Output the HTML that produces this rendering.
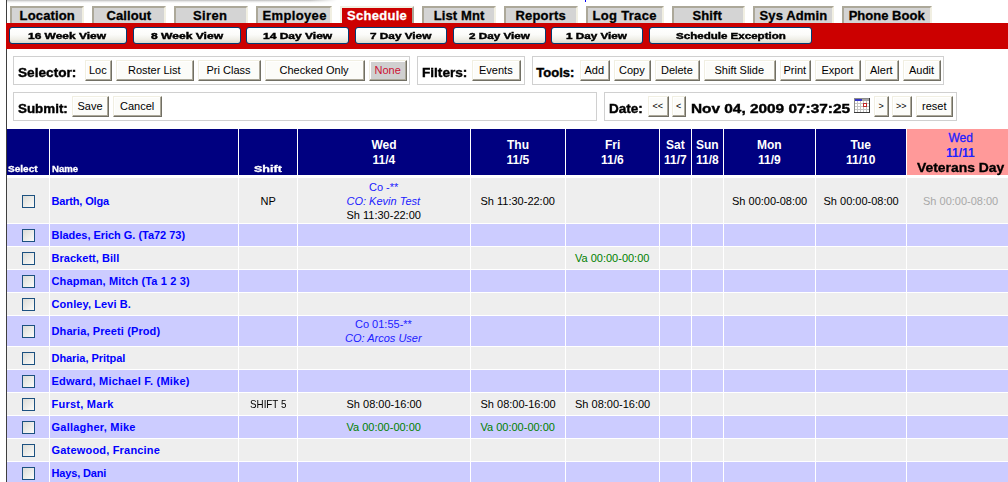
<!DOCTYPE html>
<html><head><meta charset="utf-8"><style>
html,body{margin:0;padding:0;background:#fff;}
body{width:1008px;height:482px;overflow:hidden;position:relative;font-family:"Liberation Sans",sans-serif;}
body>div,body>svg{position:absolute;}
</style></head><body>
<div style="left:6px;top:0px;width:1px;height:482px;background:#3f3f3f"></div>
<div style="left:7px;top:0;width:330px;height:3px;background:linear-gradient(#bdbdbd,#e6e6e6 50%,#fff);-webkit-mask-image:linear-gradient(90deg,#000 92%,transparent)"></div>
<div style="left:10px;top:6px;width:74px;height:17px;background:#d4d4d4;border-top:2px solid #aca899;border-left:2px solid #aca899;border-right:2px solid #f1efe2;box-sizing:border-box"></div>
<div style="top:8px;line-height:15px;font-size:13px;color:#000;white-space:nowrap;font-weight:bold;letter-spacing:0.143px;-webkit-text-stroke:0.3px #000;left:19.60px;">Location</div>
<div style="left:92px;top:6px;width:74px;height:17px;background:#d4d4d4;border-top:2px solid #aca899;border-left:2px solid #aca899;border-right:2px solid #f1efe2;box-sizing:border-box"></div>
<div style="top:8px;line-height:15px;font-size:13px;color:#000;white-space:nowrap;font-weight:bold;letter-spacing:0.083px;-webkit-text-stroke:0.3px #000;left:106.50px;">Callout</div>
<div style="left:174px;top:6px;width:74px;height:17px;background:#d4d4d4;border-top:2px solid #aca899;border-left:2px solid #aca899;border-right:2px solid #f1efe2;box-sizing:border-box"></div>
<div style="top:8px;line-height:15px;font-size:13px;color:#000;white-space:nowrap;font-weight:bold;letter-spacing:0.375px;-webkit-text-stroke:0.3px #000;left:193.00px;">Siren</div>
<div style="left:256px;top:6px;width:76px;height:17px;background:#d4d4d4;border-top:2px solid #aca899;border-left:2px solid #aca899;border-right:2px solid #f1efe2;box-sizing:border-box"></div>
<div style="top:8px;line-height:15px;font-size:13px;color:#000;white-space:nowrap;font-weight:bold;letter-spacing:0.357px;-webkit-text-stroke:0.3px #000;left:262.50px;">Employee</div>
<div style="left:340px;top:6px;width:74px;height:17px;background:#cc0000;border-top:2px solid #f1efe2;border-left:2px solid #f1efe2;border-right:2px solid #aca899;box-sizing:border-box"></div>
<div style="top:8px;line-height:15px;font-size:13px;color:#fff;white-space:nowrap;font-weight:bold;letter-spacing:0.286px;-webkit-text-stroke:0.3px #fff;left:347.00px;">Schedule</div>
<div style="left:422px;top:6px;width:74px;height:17px;background:#d4d4d4;border-top:2px solid #aca899;border-left:2px solid #aca899;border-right:2px solid #f1efe2;box-sizing:border-box"></div>
<div style="top:8px;line-height:15px;font-size:13px;color:#000;white-space:nowrap;font-weight:bold;letter-spacing:0.107px;-webkit-text-stroke:0.3px #000;left:433.75px;">List Mnt</div>
<div style="left:504px;top:6px;width:74px;height:17px;background:#d4d4d4;border-top:2px solid #aca899;border-left:2px solid #aca899;border-right:2px solid #f1efe2;box-sizing:border-box"></div>
<div style="top:8px;line-height:15px;font-size:13px;color:#000;white-space:nowrap;font-weight:bold;letter-spacing:0.167px;-webkit-text-stroke:0.3px #000;left:515.50px;">Reports</div>
<div style="left:586px;top:6px;width:78px;height:17px;background:#d4d4d4;border-top:2px solid #aca899;border-left:2px solid #aca899;border-right:2px solid #f1efe2;box-sizing:border-box"></div>
<div style="top:8px;line-height:15px;font-size:13px;color:#000;white-space:nowrap;font-weight:bold;letter-spacing:0.312px;-webkit-text-stroke:0.3px #000;left:592.50px;">Log Trace</div>
<div style="left:672px;top:6px;width:73px;height:17px;background:#d4d4d4;border-top:2px solid #aca899;border-left:2px solid #aca899;border-right:2px solid #f1efe2;box-sizing:border-box"></div>
<div style="top:8px;line-height:15px;font-size:13px;color:#000;white-space:nowrap;font-weight:bold;letter-spacing:0.125px;-webkit-text-stroke:0.3px #000;left:692.50px;">Shift</div>
<div style="left:753px;top:6px;width:81px;height:17px;background:#d4d4d4;border-top:2px solid #aca899;border-left:2px solid #aca899;border-right:2px solid #f1efe2;box-sizing:border-box"></div>
<div style="top:8px;line-height:15px;font-size:13px;color:#000;white-space:nowrap;font-weight:bold;letter-spacing:0.125px;-webkit-text-stroke:0.3px #000;left:759.50px;">Sys Admin</div>
<div style="left:842px;top:6px;width:90px;height:17px;background:#d4d4d4;border-top:2px solid #aca899;border-left:2px solid #aca899;border-right:2px solid #f1efe2;box-sizing:border-box"></div>
<div style="top:8px;line-height:15px;font-size:13px;color:#000;white-space:nowrap;font-weight:bold;letter-spacing:0.011px;-webkit-text-stroke:0.3px #000;left:848.70px;">Phone Book</div>
<div style="left:6px;top:23px;width:1002px;height:26px;background:#cc0000"></div>
<div style="left:9px;top:27px;width:118px;height:17px;box-sizing:border-box;border:1px solid #003c74;border-radius:3px;background:linear-gradient(#fff 0%,#fbfbf9 45%,#f0efe8 75%,#dcd9ca 100%)"></div>
<div style="top:30px;line-height:11px;font-size:9.5px;color:#000;white-space:nowrap;font-weight:bold;transform:scaleX(1.2579);transform-origin:0 0;-webkit-text-stroke:0.45px #000;left:28.38px;">16 Week View</div>
<div style="left:133px;top:27px;width:108px;height:17px;box-sizing:border-box;border:1px solid #003c74;border-radius:3px;background:linear-gradient(#fff 0%,#fbfbf9 45%,#f0efe8 75%,#dcd9ca 100%)"></div>
<div style="top:30px;line-height:11px;font-size:9.5px;color:#000;white-space:nowrap;font-weight:bold;transform:scaleX(1.2719);transform-origin:0 0;-webkit-text-stroke:0.45px #000;left:150.75px;">8 Week View</div>
<div style="left:246px;top:27px;width:103px;height:17px;box-sizing:border-box;border:1px solid #003c74;border-radius:3px;background:linear-gradient(#fff 0%,#fbfbf9 45%,#f0efe8 75%,#dcd9ca 100%)"></div>
<div style="top:30px;line-height:11px;font-size:9.5px;color:#000;white-space:nowrap;font-weight:bold;transform:scaleX(1.2636);transform-origin:0 0;-webkit-text-stroke:0.45px #000;left:262.75px;">14 Day View</div>
<div style="left:355px;top:27px;width:92px;height:17px;box-sizing:border-box;border:1px solid #003c74;border-radius:3px;background:linear-gradient(#fff 0%,#fbfbf9 45%,#f0efe8 75%,#dcd9ca 100%)"></div>
<div style="top:30px;line-height:11px;font-size:9.5px;color:#000;white-space:nowrap;font-weight:bold;transform:scaleX(1.2400);transform-origin:0 0;-webkit-text-stroke:0.45px #000;left:370.00px;">7 Day View</div>
<div style="left:453px;top:27px;width:93px;height:17px;box-sizing:border-box;border:1px solid #003c74;border-radius:3px;background:linear-gradient(#fff 0%,#fbfbf9 45%,#f0efe8 75%,#dcd9ca 100%)"></div>
<div style="top:30px;line-height:11px;font-size:9.5px;color:#000;white-space:nowrap;font-weight:bold;transform:scaleX(1.2300);transform-origin:0 0;-webkit-text-stroke:0.45px #000;left:468.75px;">2 Day View</div>
<div style="left:551px;top:27px;width:92px;height:17px;box-sizing:border-box;border:1px solid #003c74;border-radius:3px;background:linear-gradient(#fff 0%,#fbfbf9 45%,#f0efe8 75%,#dcd9ca 100%)"></div>
<div style="top:30px;line-height:11px;font-size:9.5px;color:#000;white-space:nowrap;font-weight:bold;transform:scaleX(1.2300);transform-origin:0 0;-webkit-text-stroke:0.45px #000;left:566.25px;">1 Day View</div>
<div style="left:649px;top:27px;width:163px;height:17px;box-sizing:border-box;border:1px solid #003c74;border-radius:3px;background:linear-gradient(#fff 0%,#fbfbf9 45%,#f0efe8 75%,#dcd9ca 100%)"></div>
<div style="top:30px;line-height:11px;font-size:9.5px;color:#000;white-space:nowrap;font-weight:bold;transform:scaleX(1.2167);transform-origin:0 0;-webkit-text-stroke:0.45px #000;left:675.75px;">Schedule Exception</div>
<div style="left:13px;top:56px;width:397px;height:29px;box-sizing:border-box;border:1px solid #d0d0d0;"></div>
<div style="top:65px;line-height:15px;font-size:13px;color:#000;white-space:nowrap;font-weight:bold;transform:scaleX(1.0491);transform-origin:0 0;-webkit-text-stroke:0.4px #000;left:17.50px;">Selector:</div>
<div style="left:85px;top:60px;width:27px;height:21px;box-sizing:border-box;background:#fcfcf9;border:1px solid;border-color:#f1efe2 #716f64 #716f64 #f1efe2;box-shadow:inset -1px -1px #aca899,inset 1px 1px #fff"></div>
<div style="top:64px;line-height:12px;font-size:11px;color:#000;white-space:nowrap;left:89.00px;">Loc</div>
<div style="left:116px;top:60px;width:78px;height:21px;box-sizing:border-box;background:#fcfcf9;border:1px solid;border-color:#f1efe2 #716f64 #716f64 #f1efe2;box-shadow:inset -1px -1px #aca899,inset 1px 1px #fff"></div>
<div style="top:64px;line-height:12px;font-size:11px;color:#000;white-space:nowrap;left:128.00px;">Roster List</div>
<div style="left:198px;top:60px;width:63px;height:21px;box-sizing:border-box;background:#fcfcf9;border:1px solid;border-color:#f1efe2 #716f64 #716f64 #f1efe2;box-shadow:inset -1px -1px #aca899,inset 1px 1px #fff"></div>
<div style="top:64px;line-height:12px;font-size:11px;color:#000;white-space:nowrap;left:206.50px;">Pri Class</div>
<div style="left:265px;top:60px;width:100px;height:21px;box-sizing:border-box;background:#fcfcf9;border:1px solid;border-color:#f1efe2 #716f64 #716f64 #f1efe2;box-shadow:inset -1px -1px #aca899,inset 1px 1px #fff"></div>
<div style="top:64px;line-height:12px;font-size:11px;color:#000;white-space:nowrap;left:279.50px;">Checked Only</div>
<div style="left:369px;top:60px;width:38px;height:21px;box-sizing:border-box;background:#d0d0d0;border:1px solid;border-color:#f1efe2 #716f64 #716f64 #f1efe2;box-shadow:inset -1px -1px #aca899,inset 1px 1px #fff"></div>
<div style="top:64px;line-height:12px;font-size:11px;color:#cc1133;white-space:nowrap;left:374.50px;">None</div>
<div style="left:417px;top:56px;width:108px;height:29px;box-sizing:border-box;border:1px solid #d0d0d0;"></div>
<div style="top:65px;line-height:15px;font-size:13px;color:#000;white-space:nowrap;font-weight:bold;transform:scaleX(1.0465);transform-origin:0 0;-webkit-text-stroke:0.4px #000;left:422.00px;">Filters:</div>
<div style="left:472px;top:60px;width:49px;height:21px;box-sizing:border-box;background:#fcfcf9;border:1px solid;border-color:#f1efe2 #716f64 #716f64 #f1efe2;box-shadow:inset -1px -1px #aca899,inset 1px 1px #fff"></div>
<div style="top:64px;line-height:12px;font-size:11px;color:#000;white-space:nowrap;left:479.00px;">Events</div>
<div style="left:532px;top:56px;width:412px;height:29px;box-sizing:border-box;border:1px solid #d0d0d0;"></div>
<div style="top:65px;line-height:15px;font-size:13px;color:#000;white-space:nowrap;font-weight:bold;-webkit-text-stroke:0.4px #000;left:536.30px;">Tools:</div>
<div style="left:580px;top:60px;width:30px;height:21px;box-sizing:border-box;background:#fcfcf9;border:1px solid;border-color:#f1efe2 #716f64 #716f64 #f1efe2;box-shadow:inset -1px -1px #aca899,inset 1px 1px #fff"></div>
<div style="top:64px;line-height:12px;font-size:11px;color:#000;white-space:nowrap;left:584.50px;">Add</div>
<div style="left:614px;top:60px;width:37px;height:21px;box-sizing:border-box;background:#fcfcf9;border:1px solid;border-color:#f1efe2 #716f64 #716f64 #f1efe2;box-shadow:inset -1px -1px #aca899,inset 1px 1px #fff"></div>
<div style="top:64px;line-height:12px;font-size:11px;color:#000;white-space:nowrap;left:619.00px;">Copy</div>
<div style="left:655px;top:60px;width:45px;height:21px;box-sizing:border-box;background:#fcfcf9;border:1px solid;border-color:#f1efe2 #716f64 #716f64 #f1efe2;box-shadow:inset -1px -1px #aca899,inset 1px 1px #fff"></div>
<div style="top:64px;line-height:12px;font-size:11px;color:#000;white-space:nowrap;left:661.00px;">Delete</div>
<div style="left:704px;top:60px;width:72px;height:21px;box-sizing:border-box;background:#fcfcf9;border:1px solid;border-color:#f1efe2 #716f64 #716f64 #f1efe2;box-shadow:inset -1px -1px #aca899,inset 1px 1px #fff"></div>
<div style="top:64px;line-height:12px;font-size:11px;color:#000;white-space:nowrap;left:714.50px;">Shift Slide</div>
<div style="left:780px;top:60px;width:31px;height:21px;box-sizing:border-box;background:#fcfcf9;border:1px solid;border-color:#f1efe2 #716f64 #716f64 #f1efe2;box-shadow:inset -1px -1px #aca899,inset 1px 1px #fff"></div>
<div style="top:64px;line-height:12px;font-size:11px;color:#000;white-space:nowrap;left:783.50px;">Print</div>
<div style="left:815px;top:60px;width:46px;height:21px;box-sizing:border-box;background:#fcfcf9;border:1px solid;border-color:#f1efe2 #716f64 #716f64 #f1efe2;box-shadow:inset -1px -1px #aca899,inset 1px 1px #fff"></div>
<div style="top:64px;line-height:12px;font-size:11px;color:#000;white-space:nowrap;left:821.50px;">Export</div>
<div style="left:865px;top:60px;width:34px;height:21px;box-sizing:border-box;background:#fcfcf9;border:1px solid;border-color:#f1efe2 #716f64 #716f64 #f1efe2;box-shadow:inset -1px -1px #aca899,inset 1px 1px #fff"></div>
<div style="top:64px;line-height:12px;font-size:11px;color:#000;white-space:nowrap;left:870.00px;">Alert</div>
<div style="left:903px;top:60px;width:38px;height:21px;box-sizing:border-box;background:#fcfcf9;border:1px solid;border-color:#f1efe2 #716f64 #716f64 #f1efe2;box-shadow:inset -1px -1px #aca899,inset 1px 1px #fff"></div>
<div style="top:64px;line-height:12px;font-size:11px;color:#000;white-space:nowrap;left:909.00px;">Audit</div>
<div style="left:13px;top:92px;width:584px;height:29px;box-sizing:border-box;border:1px solid #d0d0d0;"></div>
<div style="top:101px;line-height:15px;font-size:13px;color:#000;white-space:nowrap;font-weight:bold;transform:scaleX(1.0292);transform-origin:0 0;-webkit-text-stroke:0.4px #000;left:17.50px;">Submit:</div>
<div style="left:72px;top:96px;width:37px;height:21px;box-sizing:border-box;background:#fcfcf9;border:1px solid;border-color:#f1efe2 #716f64 #716f64 #f1efe2;box-shadow:inset -1px -1px #aca899,inset 1px 1px #fff"></div>
<div style="top:100px;line-height:12px;font-size:11px;color:#000;white-space:nowrap;left:77.50px;">Save</div>
<div style="left:113px;top:96px;width:49px;height:21px;box-sizing:border-box;background:#fcfcf9;border:1px solid;border-color:#f1efe2 #716f64 #716f64 #f1efe2;box-shadow:inset -1px -1px #aca899,inset 1px 1px #fff"></div>
<div style="top:100px;line-height:12px;font-size:11px;color:#000;white-space:nowrap;left:120.00px;">Cancel</div>
<div style="left:604px;top:92px;width:353px;height:29px;box-sizing:border-box;border:1px solid #d0d0d0;"></div>
<div style="top:101px;line-height:15px;font-size:13px;color:#000;white-space:nowrap;font-weight:bold;transform:scaleX(1.0394);transform-origin:0 0;-webkit-text-stroke:0.4px #000;left:609.00px;">Date:</div>
<div style="left:648px;top:96px;width:21px;height:21px;box-sizing:border-box;background:#fcfcf9;border:1px solid;border-color:#f1efe2 #716f64 #716f64 #f1efe2;box-shadow:inset -1px -1px #aca899,inset 1px 1px #fff"></div>
<div style="top:101px;line-height:10px;font-size:9px;color:#000;white-space:nowrap;left:652.50px;">&lt;&lt;</div>
<div style="left:672px;top:96px;width:14px;height:21px;box-sizing:border-box;background:#fcfcf9;border:1px solid;border-color:#f1efe2 #716f64 #716f64 #f1efe2;box-shadow:inset -1px -1px #aca899,inset 1px 1px #fff"></div>
<div style="top:101px;line-height:10px;font-size:9px;color:#000;white-space:nowrap;left:676.00px;">&lt;</div>
<div style="top:101px;line-height:15px;font-size:13px;color:#000;white-space:nowrap;font-weight:bold;transform:scaleX(1.1828);transform-origin:0 0;-webkit-text-stroke:0.4px #000;left:690.50px;">Nov 04, 2009 07:37:25</div>
<svg style="left:854px;top:98px" width="16" height="15" viewBox="0 0 16 15" shape-rendering="crispEdges"><rect x="0" y="0" width="16" height="15" fill="#c4c4c4"/><rect x="0" y="0" width="16" height="1" fill="#8c8c8c"/><rect x="0" y="0" width="1" height="15" fill="#8c8c8c"/><rect x="15" y="0" width="1" height="15" fill="#3a3a3a"/><rect x="0" y="14" width="16" height="1" fill="#3a3a3a"/><rect x="1" y="1" width="7" height="2" fill="#3434c4"/><rect x="8" y="1" width="7" height="2" fill="#a4a4a4"/><rect x="1" y="3" width="2" height="2" fill="#fff"/><rect x="1" y="6" width="2" height="2" fill="#fff"/><rect x="1" y="9" width="2" height="2" fill="#fff"/><rect x="1" y="12" width="2" height="2" fill="#fff"/><rect x="4" y="3" width="2" height="2" fill="#fff"/><rect x="4" y="6" width="2" height="2" fill="#fff"/><rect x="4" y="9" width="2" height="2" fill="#fff"/><rect x="4" y="12" width="2" height="2" fill="#fff"/><rect x="7" y="3" width="2" height="2" fill="#fff"/><rect x="7" y="6" width="2" height="2" fill="#fff"/><rect x="7" y="9" width="2" height="2" fill="#fff"/><rect x="7" y="12" width="2" height="2" fill="#fff"/><rect x="10" y="3" width="2" height="2" fill="#fff"/><rect x="10" y="6" width="2" height="2" fill="#fff"/><rect x="10" y="9" width="2" height="2" fill="#fff"/><rect x="10" y="12" width="2" height="2" fill="#fff"/><rect x="13" y="3" width="2" height="2" fill="#fff"/><rect x="13" y="6" width="2" height="2" fill="#fff"/><rect x="13" y="9" width="2" height="2" fill="#fff"/><rect x="13" y="12" width="2" height="2" fill="#fff"/><rect x="9.5" y="5.5" width="3" height="3" fill="none" stroke="#c02828"/></svg>
<div style="left:874px;top:96px;width:15px;height:21px;box-sizing:border-box;background:#fcfcf9;border:1px solid;border-color:#f1efe2 #716f64 #716f64 #f1efe2;box-shadow:inset -1px -1px #aca899,inset 1px 1px #fff"></div>
<div style="top:101px;line-height:10px;font-size:9px;color:#000;white-space:nowrap;left:878.50px;">&gt;</div>
<div style="left:892px;top:96px;width:20px;height:21px;box-sizing:border-box;background:#fcfcf9;border:1px solid;border-color:#f1efe2 #716f64 #716f64 #f1efe2;box-shadow:inset -1px -1px #aca899,inset 1px 1px #fff"></div>
<div style="top:101px;line-height:10px;font-size:9px;color:#000;white-space:nowrap;left:896.00px;">&gt;&gt;</div>
<div style="left:916px;top:96px;width:37px;height:21px;box-sizing:border-box;background:#fcfcf9;border:1px solid;border-color:#f1efe2 #716f64 #716f64 #f1efe2;box-shadow:inset -1px -1px #aca899,inset 1px 1px #fff"></div>
<div style="top:100px;line-height:12px;font-size:11px;color:#000;white-space:nowrap;left:922.00px;">reset</div>
<div style="left:585px;top:0px;width:1px;height:2px;background:#0000ff"></div>
<div style="left:7px;top:129px;width:42px;height:46px;background:#000080"></div>
<div style="left:50px;top:129px;width:188px;height:46px;background:#000080"></div>
<div style="left:239px;top:129px;width:58px;height:46px;background:#000080"></div>
<div style="left:298px;top:129px;width:172px;height:46px;background:#000080"></div>
<div style="left:471px;top:129px;width:94px;height:46px;background:#000080"></div>
<div style="left:566px;top:129px;width:93px;height:46px;background:#000080"></div>
<div style="left:660px;top:129px;width:31px;height:46px;background:#000080"></div>
<div style="left:692px;top:129px;width:31px;height:46px;background:#000080"></div>
<div style="left:724px;top:129px;width:91px;height:46px;background:#000080"></div>
<div style="left:816px;top:129px;width:90px;height:46px;background:#000080"></div>
<div style="left:907px;top:129px;width:101px;height:46px;background:#ff9999"></div>
<div style="top:163px;line-height:11px;font-size:9.5px;color:#fff;white-space:nowrap;font-weight:bold;transform:scaleX(1.0586);transform-origin:0 0;-webkit-text-stroke:0.3px #fff;left:8.30px;">Select</div>
<div style="top:163px;line-height:11px;font-size:9.5px;color:#fff;white-space:nowrap;font-weight:bold;transform:scaleX(1.0093);transform-origin:0 0;-webkit-text-stroke:0.3px #fff;left:51.50px;">Name</div>
<div style="top:163px;line-height:11px;font-size:9.5px;color:#fff;white-space:nowrap;font-weight:bold;transform:scaleX(1.3182);transform-origin:0 0;-webkit-text-stroke:0.3px #fff;left:253.50px;">Shift</div>
<div style="top:138px;line-height:14px;font-size:12px;color:#fff;white-space:nowrap;font-weight:bold;left:371.50px;">Wed</div>
<div style="top:153px;line-height:14px;font-size:12px;color:#fff;white-space:nowrap;font-weight:bold;left:372.50px;">11/4</div>
<div style="top:138px;line-height:14px;font-size:12px;color:#fff;white-space:nowrap;font-weight:bold;left:507.00px;">Thu</div>
<div style="top:153px;line-height:14px;font-size:12px;color:#fff;white-space:nowrap;font-weight:bold;left:506.50px;">11/5</div>
<div style="top:138px;line-height:14px;font-size:12px;color:#fff;white-space:nowrap;font-weight:bold;left:605.00px;">Fri</div>
<div style="top:153px;line-height:14px;font-size:12px;color:#fff;white-space:nowrap;font-weight:bold;left:601.00px;">11/6</div>
<div style="top:138px;line-height:14px;font-size:12px;color:#fff;white-space:nowrap;font-weight:bold;left:666.00px;">Sat</div>
<div style="top:153px;line-height:14px;font-size:12px;color:#fff;white-space:nowrap;font-weight:bold;left:664.00px;">11/7</div>
<div style="top:138px;line-height:14px;font-size:12px;color:#fff;white-space:nowrap;font-weight:bold;left:696.00px;">Sun</div>
<div style="top:153px;line-height:14px;font-size:12px;color:#fff;white-space:nowrap;font-weight:bold;left:696.00px;">11/8</div>
<div style="top:138px;line-height:14px;font-size:12px;color:#fff;white-space:nowrap;font-weight:bold;left:757.00px;">Mon</div>
<div style="top:153px;line-height:14px;font-size:12px;color:#fff;white-space:nowrap;font-weight:bold;left:758.00px;">11/9</div>
<div style="top:138px;line-height:14px;font-size:12px;color:#fff;white-space:nowrap;font-weight:bold;left:850.50px;">Tue</div>
<div style="top:153px;line-height:14px;font-size:12px;color:#fff;white-space:nowrap;font-weight:bold;left:846.00px;">11/10</div>
<div style="top:131px;line-height:14px;font-size:12px;color:#2020ff;white-space:nowrap;-webkit-text-stroke:0.3px #2020ff;left:948.50px;">Wed</div>
<div style="top:146px;line-height:14px;font-size:12px;color:#2020ff;white-space:nowrap;font-weight:bold;left:946.00px;">11/11</div>
<div style="top:161px;line-height:14px;font-size:12px;color:#000;white-space:nowrap;font-weight:bold;transform:scaleX(1.1579);transform-origin:0 0;-webkit-text-stroke:0.3px #000;left:916.80px;">Veterans Day</div>
<div style="left:7px;top:178px;width:42px;height:45px;background:#eeeeee"></div>
<div style="left:50px;top:178px;width:188px;height:45px;background:#eeeeee"></div>
<div style="left:239px;top:178px;width:58px;height:45px;background:#eeeeee"></div>
<div style="left:298px;top:178px;width:172px;height:45px;background:#eeeeee"></div>
<div style="left:471px;top:178px;width:94px;height:45px;background:#eeeeee"></div>
<div style="left:566px;top:178px;width:93px;height:45px;background:#eeeeee"></div>
<div style="left:660px;top:178px;width:31px;height:45px;background:#eeeeee"></div>
<div style="left:692px;top:178px;width:31px;height:45px;background:#eeeeee"></div>
<div style="left:724px;top:178px;width:91px;height:45px;background:#eeeeee"></div>
<div style="left:816px;top:178px;width:90px;height:45px;background:#eeeeee"></div>
<div style="left:907px;top:178px;width:101px;height:45px;background:#eeeeee"></div>
<div style="left:22px;top:195px;width:13px;height:13px;box-sizing:border-box;border:1px solid #1c5180;background:linear-gradient(135deg,#dcdcd7,#fbfbf9)"></div>
<div style="top:195px;line-height:12px;font-size:11px;color:#0000ff;white-space:nowrap;font-weight:bold;letter-spacing:-0.170px;left:51.50px;">Barth, Olga</div>
<div style="left:7px;top:224px;width:42px;height:22px;background:#ccccff"></div>
<div style="left:50px;top:224px;width:188px;height:22px;background:#ccccff"></div>
<div style="left:239px;top:224px;width:58px;height:22px;background:#ccccff"></div>
<div style="left:298px;top:224px;width:172px;height:22px;background:#ccccff"></div>
<div style="left:471px;top:224px;width:94px;height:22px;background:#ccccff"></div>
<div style="left:566px;top:224px;width:93px;height:22px;background:#ccccff"></div>
<div style="left:660px;top:224px;width:31px;height:22px;background:#ccccff"></div>
<div style="left:692px;top:224px;width:31px;height:22px;background:#ccccff"></div>
<div style="left:724px;top:224px;width:91px;height:22px;background:#ccccff"></div>
<div style="left:816px;top:224px;width:90px;height:22px;background:#ccccff"></div>
<div style="left:907px;top:224px;width:101px;height:22px;background:#ccccff"></div>
<div style="left:22px;top:229px;width:13px;height:13px;box-sizing:border-box;border:1px solid #1c5180;background:linear-gradient(135deg,#dcdcd7,#fbfbf9)"></div>
<div style="top:229px;line-height:12px;font-size:11px;color:#0000ff;white-space:nowrap;font-weight:bold;letter-spacing:-0.030px;left:51.50px;">Blades, Erich G. (Ta72 73)</div>
<div style="left:7px;top:247px;width:42px;height:22px;background:#eeeeee"></div>
<div style="left:50px;top:247px;width:188px;height:22px;background:#eeeeee"></div>
<div style="left:239px;top:247px;width:58px;height:22px;background:#eeeeee"></div>
<div style="left:298px;top:247px;width:172px;height:22px;background:#eeeeee"></div>
<div style="left:471px;top:247px;width:94px;height:22px;background:#eeeeee"></div>
<div style="left:566px;top:247px;width:93px;height:22px;background:#eeeeee"></div>
<div style="left:660px;top:247px;width:31px;height:22px;background:#eeeeee"></div>
<div style="left:692px;top:247px;width:31px;height:22px;background:#eeeeee"></div>
<div style="left:724px;top:247px;width:91px;height:22px;background:#eeeeee"></div>
<div style="left:816px;top:247px;width:90px;height:22px;background:#eeeeee"></div>
<div style="left:907px;top:247px;width:101px;height:22px;background:#eeeeee"></div>
<div style="left:22px;top:252px;width:13px;height:13px;box-sizing:border-box;border:1px solid #1c5180;background:linear-gradient(135deg,#dcdcd7,#fbfbf9)"></div>
<div style="top:252px;line-height:12px;font-size:11px;color:#0000ff;white-space:nowrap;font-weight:bold;letter-spacing:0.038px;left:51.50px;">Brackett, Bill</div>
<div style="left:7px;top:270px;width:42px;height:22px;background:#ccccff"></div>
<div style="left:50px;top:270px;width:188px;height:22px;background:#ccccff"></div>
<div style="left:239px;top:270px;width:58px;height:22px;background:#ccccff"></div>
<div style="left:298px;top:270px;width:172px;height:22px;background:#ccccff"></div>
<div style="left:471px;top:270px;width:94px;height:22px;background:#ccccff"></div>
<div style="left:566px;top:270px;width:93px;height:22px;background:#ccccff"></div>
<div style="left:660px;top:270px;width:31px;height:22px;background:#ccccff"></div>
<div style="left:692px;top:270px;width:31px;height:22px;background:#ccccff"></div>
<div style="left:724px;top:270px;width:91px;height:22px;background:#ccccff"></div>
<div style="left:816px;top:270px;width:90px;height:22px;background:#ccccff"></div>
<div style="left:907px;top:270px;width:101px;height:22px;background:#ccccff"></div>
<div style="left:22px;top:275px;width:13px;height:13px;box-sizing:border-box;border:1px solid #1c5180;background:linear-gradient(135deg,#dcdcd7,#fbfbf9)"></div>
<div style="top:275px;line-height:12px;font-size:11px;color:#0000ff;white-space:nowrap;font-weight:bold;letter-spacing:0.135px;left:51.50px;">Chapman, Mitch (Ta 1 2 3)</div>
<div style="left:7px;top:293px;width:42px;height:22px;background:#eeeeee"></div>
<div style="left:50px;top:293px;width:188px;height:22px;background:#eeeeee"></div>
<div style="left:239px;top:293px;width:58px;height:22px;background:#eeeeee"></div>
<div style="left:298px;top:293px;width:172px;height:22px;background:#eeeeee"></div>
<div style="left:471px;top:293px;width:94px;height:22px;background:#eeeeee"></div>
<div style="left:566px;top:293px;width:93px;height:22px;background:#eeeeee"></div>
<div style="left:660px;top:293px;width:31px;height:22px;background:#eeeeee"></div>
<div style="left:692px;top:293px;width:31px;height:22px;background:#eeeeee"></div>
<div style="left:724px;top:293px;width:91px;height:22px;background:#eeeeee"></div>
<div style="left:816px;top:293px;width:90px;height:22px;background:#eeeeee"></div>
<div style="left:907px;top:293px;width:101px;height:22px;background:#eeeeee"></div>
<div style="left:22px;top:298px;width:13px;height:13px;box-sizing:border-box;border:1px solid #1c5180;background:linear-gradient(135deg,#dcdcd7,#fbfbf9)"></div>
<div style="top:298px;line-height:12px;font-size:11px;color:#0000ff;white-space:nowrap;font-weight:bold;letter-spacing:0.089px;left:51.50px;">Conley, Levi B.</div>
<div style="left:7px;top:316px;width:42px;height:30px;background:#ccccff"></div>
<div style="left:50px;top:316px;width:188px;height:30px;background:#ccccff"></div>
<div style="left:239px;top:316px;width:58px;height:30px;background:#ccccff"></div>
<div style="left:298px;top:316px;width:172px;height:30px;background:#ccccff"></div>
<div style="left:471px;top:316px;width:94px;height:30px;background:#ccccff"></div>
<div style="left:566px;top:316px;width:93px;height:30px;background:#ccccff"></div>
<div style="left:660px;top:316px;width:31px;height:30px;background:#ccccff"></div>
<div style="left:692px;top:316px;width:31px;height:30px;background:#ccccff"></div>
<div style="left:724px;top:316px;width:91px;height:30px;background:#ccccff"></div>
<div style="left:816px;top:316px;width:90px;height:30px;background:#ccccff"></div>
<div style="left:907px;top:316px;width:101px;height:30px;background:#ccccff"></div>
<div style="left:22px;top:325px;width:13px;height:13px;box-sizing:border-box;border:1px solid #1c5180;background:linear-gradient(135deg,#dcdcd7,#fbfbf9)"></div>
<div style="top:325px;line-height:12px;font-size:11px;color:#0000ff;white-space:nowrap;font-weight:bold;letter-spacing:0.113px;left:51.50px;">Dharia, Preeti (Prod)</div>
<div style="left:7px;top:347px;width:42px;height:22px;background:#eeeeee"></div>
<div style="left:50px;top:347px;width:188px;height:22px;background:#eeeeee"></div>
<div style="left:239px;top:347px;width:58px;height:22px;background:#eeeeee"></div>
<div style="left:298px;top:347px;width:172px;height:22px;background:#eeeeee"></div>
<div style="left:471px;top:347px;width:94px;height:22px;background:#eeeeee"></div>
<div style="left:566px;top:347px;width:93px;height:22px;background:#eeeeee"></div>
<div style="left:660px;top:347px;width:31px;height:22px;background:#eeeeee"></div>
<div style="left:692px;top:347px;width:31px;height:22px;background:#eeeeee"></div>
<div style="left:724px;top:347px;width:91px;height:22px;background:#eeeeee"></div>
<div style="left:816px;top:347px;width:90px;height:22px;background:#eeeeee"></div>
<div style="left:907px;top:347px;width:101px;height:22px;background:#eeeeee"></div>
<div style="left:22px;top:352px;width:13px;height:13px;box-sizing:border-box;border:1px solid #1c5180;background:linear-gradient(135deg,#dcdcd7,#fbfbf9)"></div>
<div style="top:352px;line-height:12px;font-size:11px;color:#0000ff;white-space:nowrap;font-weight:bold;letter-spacing:-0.054px;left:51.50px;">Dharia, Pritpal</div>
<div style="left:7px;top:370px;width:42px;height:22px;background:#ccccff"></div>
<div style="left:50px;top:370px;width:188px;height:22px;background:#ccccff"></div>
<div style="left:239px;top:370px;width:58px;height:22px;background:#ccccff"></div>
<div style="left:298px;top:370px;width:172px;height:22px;background:#ccccff"></div>
<div style="left:471px;top:370px;width:94px;height:22px;background:#ccccff"></div>
<div style="left:566px;top:370px;width:93px;height:22px;background:#ccccff"></div>
<div style="left:660px;top:370px;width:31px;height:22px;background:#ccccff"></div>
<div style="left:692px;top:370px;width:31px;height:22px;background:#ccccff"></div>
<div style="left:724px;top:370px;width:91px;height:22px;background:#ccccff"></div>
<div style="left:816px;top:370px;width:90px;height:22px;background:#ccccff"></div>
<div style="left:907px;top:370px;width:101px;height:22px;background:#ccccff"></div>
<div style="left:22px;top:375px;width:13px;height:13px;box-sizing:border-box;border:1px solid #1c5180;background:linear-gradient(135deg,#dcdcd7,#fbfbf9)"></div>
<div style="top:375px;line-height:12px;font-size:11px;color:#0000ff;white-space:nowrap;font-weight:bold;letter-spacing:0.219px;left:51.50px;">Edward, Michael F. (Mike)</div>
<div style="left:7px;top:393px;width:42px;height:22px;background:#eeeeee"></div>
<div style="left:50px;top:393px;width:188px;height:22px;background:#eeeeee"></div>
<div style="left:239px;top:393px;width:58px;height:22px;background:#eeeeee"></div>
<div style="left:298px;top:393px;width:172px;height:22px;background:#eeeeee"></div>
<div style="left:471px;top:393px;width:94px;height:22px;background:#eeeeee"></div>
<div style="left:566px;top:393px;width:93px;height:22px;background:#eeeeee"></div>
<div style="left:660px;top:393px;width:31px;height:22px;background:#eeeeee"></div>
<div style="left:692px;top:393px;width:31px;height:22px;background:#eeeeee"></div>
<div style="left:724px;top:393px;width:91px;height:22px;background:#eeeeee"></div>
<div style="left:816px;top:393px;width:90px;height:22px;background:#eeeeee"></div>
<div style="left:907px;top:393px;width:101px;height:22px;background:#eeeeee"></div>
<div style="left:22px;top:398px;width:13px;height:13px;box-sizing:border-box;border:1px solid #1c5180;background:linear-gradient(135deg,#dcdcd7,#fbfbf9)"></div>
<div style="top:398px;line-height:12px;font-size:11px;color:#0000ff;white-space:nowrap;font-weight:bold;letter-spacing:0.250px;left:51.50px;">Furst, Mark</div>
<div style="left:7px;top:416px;width:42px;height:22px;background:#ccccff"></div>
<div style="left:50px;top:416px;width:188px;height:22px;background:#ccccff"></div>
<div style="left:239px;top:416px;width:58px;height:22px;background:#ccccff"></div>
<div style="left:298px;top:416px;width:172px;height:22px;background:#ccccff"></div>
<div style="left:471px;top:416px;width:94px;height:22px;background:#ccccff"></div>
<div style="left:566px;top:416px;width:93px;height:22px;background:#ccccff"></div>
<div style="left:660px;top:416px;width:31px;height:22px;background:#ccccff"></div>
<div style="left:692px;top:416px;width:31px;height:22px;background:#ccccff"></div>
<div style="left:724px;top:416px;width:91px;height:22px;background:#ccccff"></div>
<div style="left:816px;top:416px;width:90px;height:22px;background:#ccccff"></div>
<div style="left:907px;top:416px;width:101px;height:22px;background:#ccccff"></div>
<div style="left:22px;top:421px;width:13px;height:13px;box-sizing:border-box;border:1px solid #1c5180;background:linear-gradient(135deg,#dcdcd7,#fbfbf9)"></div>
<div style="top:421px;line-height:12px;font-size:11px;color:#0000ff;white-space:nowrap;font-weight:bold;letter-spacing:0.232px;left:51.50px;">Gallagher, Mike</div>
<div style="left:7px;top:439px;width:42px;height:22px;background:#eeeeee"></div>
<div style="left:50px;top:439px;width:188px;height:22px;background:#eeeeee"></div>
<div style="left:239px;top:439px;width:58px;height:22px;background:#eeeeee"></div>
<div style="left:298px;top:439px;width:172px;height:22px;background:#eeeeee"></div>
<div style="left:471px;top:439px;width:94px;height:22px;background:#eeeeee"></div>
<div style="left:566px;top:439px;width:93px;height:22px;background:#eeeeee"></div>
<div style="left:660px;top:439px;width:31px;height:22px;background:#eeeeee"></div>
<div style="left:692px;top:439px;width:31px;height:22px;background:#eeeeee"></div>
<div style="left:724px;top:439px;width:91px;height:22px;background:#eeeeee"></div>
<div style="left:816px;top:439px;width:90px;height:22px;background:#eeeeee"></div>
<div style="left:907px;top:439px;width:101px;height:22px;background:#eeeeee"></div>
<div style="left:22px;top:444px;width:13px;height:13px;box-sizing:border-box;border:1px solid #1c5180;background:linear-gradient(135deg,#dcdcd7,#fbfbf9)"></div>
<div style="top:444px;line-height:12px;font-size:11px;color:#0000ff;white-space:nowrap;font-weight:bold;letter-spacing:0.191px;left:51.50px;">Gatewood, Francine</div>
<div style="left:7px;top:462px;width:42px;height:22px;background:#ccccff"></div>
<div style="left:50px;top:462px;width:188px;height:22px;background:#ccccff"></div>
<div style="left:239px;top:462px;width:58px;height:22px;background:#ccccff"></div>
<div style="left:298px;top:462px;width:172px;height:22px;background:#ccccff"></div>
<div style="left:471px;top:462px;width:94px;height:22px;background:#ccccff"></div>
<div style="left:566px;top:462px;width:93px;height:22px;background:#ccccff"></div>
<div style="left:660px;top:462px;width:31px;height:22px;background:#ccccff"></div>
<div style="left:692px;top:462px;width:31px;height:22px;background:#ccccff"></div>
<div style="left:724px;top:462px;width:91px;height:22px;background:#ccccff"></div>
<div style="left:816px;top:462px;width:90px;height:22px;background:#ccccff"></div>
<div style="left:907px;top:462px;width:101px;height:22px;background:#ccccff"></div>
<div style="left:22px;top:467px;width:13px;height:13px;box-sizing:border-box;border:1px solid #1c5180;background:linear-gradient(135deg,#dcdcd7,#fbfbf9)"></div>
<div style="top:467px;line-height:12px;font-size:11px;color:#0000ff;white-space:nowrap;font-weight:bold;letter-spacing:-0.167px;left:51.50px;">Hays, Dani</div>
<div style="top:195px;line-height:12px;font-size:11px;color:#000;white-space:nowrap;left:260.50px;">NP</div>
<div style="top:181px;line-height:12px;font-size:11px;color:#2020ff;white-space:nowrap;left:369.00px;">Co -**</div>
<div style="top:195px;line-height:12px;font-size:11px;color:#2020ff;white-space:nowrap;font-style:italic;left:346.50px;">CO: Kevin Test</div>
<div style="top:209px;line-height:12px;font-size:11px;color:#000;white-space:nowrap;left:346.50px;">Sh 11:30-22:00</div>
<div style="top:195px;line-height:12px;font-size:11px;color:#000;white-space:nowrap;left:480.50px;">Sh 11:30-22:00</div>
<div style="top:195px;line-height:12px;font-size:11px;color:#000;white-space:nowrap;left:732.00px;">Sh 00:00-08:00</div>
<div style="top:195px;line-height:12px;font-size:11px;color:#000;white-space:nowrap;left:823.50px;">Sh 00:00-08:00</div>
<div style="top:195px;line-height:12px;font-size:11px;color:#a8a8a8;white-space:nowrap;left:923.00px;">Sh 00:00-08:00</div>
<div style="top:252px;line-height:12px;font-size:11px;color:#008000;white-space:nowrap;left:575.00px;">Va 00:00-00:00</div>
<div style="top:318px;line-height:12px;font-size:11px;color:#2020ff;white-space:nowrap;left:355.00px;">Co 01:55-**</div>
<div style="top:332px;line-height:12px;font-size:11px;color:#2020ff;white-space:nowrap;font-style:italic;left:345.00px;">CO: Arcos User</div>
<div style="top:398px;line-height:12px;font-size:11px;color:#000;white-space:nowrap;transform:scaleX(0.8927);transform-origin:0 0;left:249.50px;">SHIFT 5</div>
<div style="top:398px;line-height:12px;font-size:11px;color:#000;white-space:nowrap;left:346.50px;">Sh 08:00-16:00</div>
<div style="top:398px;line-height:12px;font-size:11px;color:#000;white-space:nowrap;left:480.50px;">Sh 08:00-16:00</div>
<div style="top:398px;line-height:12px;font-size:11px;color:#000;white-space:nowrap;left:575.00px;">Sh 08:00-16:00</div>
<div style="top:421px;line-height:12px;font-size:11px;color:#008000;white-space:nowrap;left:346.50px;">Va 00:00-00:00</div>
<div style="top:421px;line-height:12px;font-size:11px;color:#008000;white-space:nowrap;left:480.50px;">Va 00:00-00:00</div>
</body></html>
